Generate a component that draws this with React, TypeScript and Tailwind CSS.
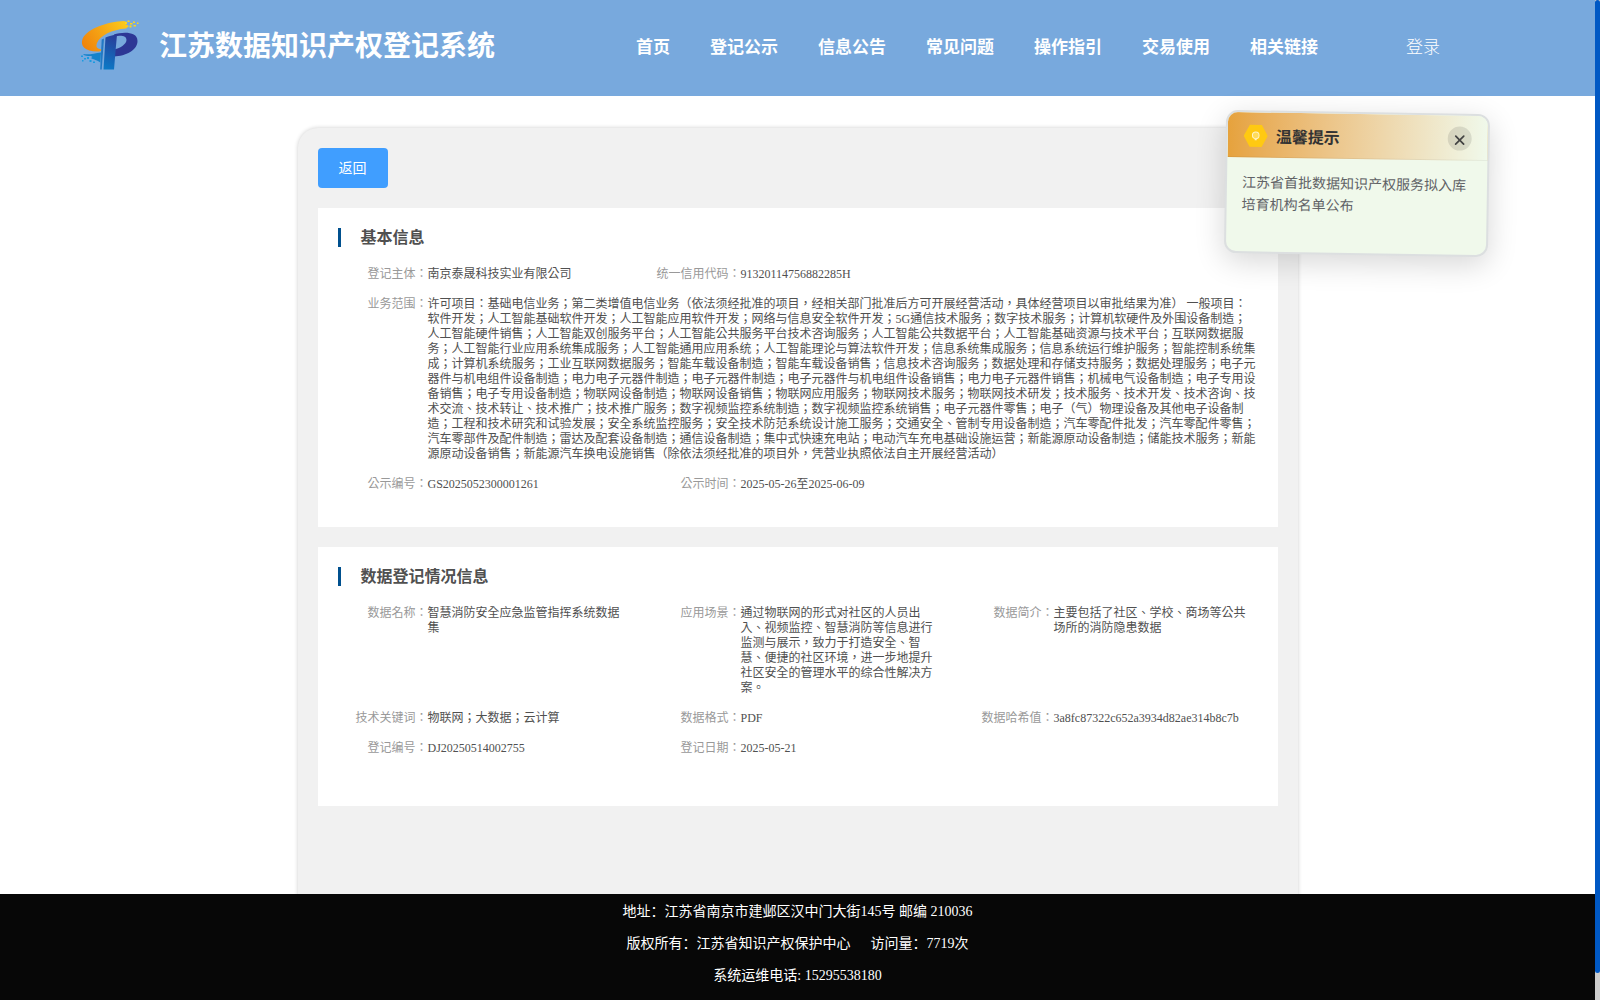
import React, { useState } from 'react';
import { X } from 'lucide-react';
import clsx from 'clsx';

interface InfoItem {
  label: string;
  value: string;
  wide?: boolean;
}

const NAV_ITEMS = ['首页', '登记公示', '信息公告', '常见问题', '操作指引', '交易使用', '相关链接'];

const BUSINESS_SCOPE = `许可项目：基础电信业务；第二类增值电信业务（依法须经批准的项目，经相关部门批准后方可开展经营活动，具体经营项目以审批结果为准） 一般项目：
软件开发；人工智能基础软件开发；人工智能应用软件开发；网络与信息安全软件开发；5G通信技术服务；数字技术服务；计算机软硬件及外围设备制造；
人工智能硬件销售；人工智能双创服务平台；人工智能公共服务平台技术咨询服务；人工智能公共数据平台；人工智能基础资源与技术平台；互联网数据服
务；人工智能行业应用系统集成服务；人工智能通用应用系统；人工智能理论与算法软件开发；信息系统集成服务；信息系统运行维护服务；智能控制系统集
成；计算机系统服务；工业互联网数据服务；智能车载设备制造；智能车载设备销售；信息技术咨询服务；数据处理和存储支持服务；数据处理服务；电子元
器件与机电组件设备制造；电力电子元器件制造；电子元器件制造；电子元器件与机电组件设备销售；电力电子元器件销售；机械电气设备制造；电子专用设
备销售；电子专用设备制造；物联网设备制造；物联网设备销售；物联网应用服务；物联网技术服务；物联网技术研发；技术服务、技术开发、技术咨询、技
术交流、技术转让、技术推广；技术推广服务；数字视频监控系统制造；数字视频监控系统销售；电子元器件零售；电子（气）物理设备及其他电子设备制
造；工程和技术研究和试验发展；安全系统监控服务；安全技术防范系统设计施工服务；交通安全、管制专用设备制造；汽车零配件批发；汽车零配件零售；
汽车零部件及配件制造；雷达及配套设备制造；通信设备制造；集中式快速充电站；电动汽车充电基础设施运营；新能源原动设备制造；储能技术服务；新能
源原动设备销售；新能源汽车换电设施销售（除依法须经批准的项目外，凭营业执照依法自主开展经营活动）`;

const BASIC_INFO: InfoItem[] = [
  { label: '登记主体', value: '南京泰晟科技实业有限公司' },
  { label: '统一信用代码', value: '91320114756882285H' },
  { label: '业务范围', value: BUSINESS_SCOPE, wide: true },
  { label: '公示编号', value: 'GS2025052300001261' },
  { label: '公示时间', value: '2025-05-26至2025-06-09' },
];

const DATA_INFO: InfoItem[] = [
  { label: '数据名称', value: '智慧消防安全应急监管指挥系统数据\n集' },
  {
    label: '应用场景',
    value:
      '通过物联网的形式对社区的人员出\n入、视频监控、智慧消防等信息进行\n监测与展示，致力于打造安全、智\n慧、便捷的社区环境，进一步地提升\n社区安全的管理水平的综合性解决方\n案。',
  },
  { label: '数据简介', value: '主要包括了社区、学校、商场等公共\n场所的消防隐患数据' },
  { label: '技术关键词', value: '物联网；大数据；云计算' },
  { label: '数据格式', value: 'PDF' },
  { label: '数据哈希值', value: '3a8fc87322c652a3934d82ae314b8c7b' },
  { label: '登记编号', value: 'DJ20250514002755' },
  { label: '登记日期', value: '2025-05-21' },
];

function Logo() {
  return (
    <svg width="60" height="52" viewBox="0 0 60 52" fill="none">
      <defs>
        <linearGradient id="swoosh" x1="0" y1="34" x2="50" y2="2" gradientUnits="userSpaceOnUse">
          <stop offset="0" stopColor="#ee7a0b" />
          <stop offset="1" stopColor="#fdd01d" />
        </linearGradient>
        <linearGradient id="stem" x1="22" y1="50" x2="38" y2="16" gradientUnits="userSpaceOnUse">
          <stop offset="0" stopColor="#0a7cc8" />
          <stop offset="1" stopColor="#2b3a97" />
        </linearGradient>
      </defs>
      <path
        d="M44 2C28 2.500 7 9.500 2.500 20 0 27 5 33 19 32.500c1.500-.2 2.500-1 3-2-5-.5-6.500-2.500-5-6.500C20 16.500 32 10.500 46 9.500l3-2.500-3-1.500 1-2.500z"
        fill="url(#swoosh)"
      />
      <path
        d="M34 15.500c8-2.500 23.500-3.500 23.500 6.500C57.500 31 46 37 34 37.500l.5-7c6-1.500 12-5.500 12-9.500 0-4-5-5-12.500-3.500z"
        fill="#2d3795"
      />
      <path d="M25.500 18.500c3.500-1.500 7-2.500 11.500-3L35.500 32.500 34 50.500H23.500z" fill="url(#stem)" />
      <path d="M24 19.500l-2.300 31h-1.500l1.500-30z" fill="#2279c4" />
      <path d="M3 35c6 1 11-.5 18-1.500l-.7 10c-4-3-7-3-9.500-4.500 2-.5 2-1.500 0-2-3 0-6.500 0-7.800-2z" fill="#1583cb" />
      <path
        d="M1 36.500h2V38H1zM4 39h2v1.500H4zM7 38h2v2H7zM2 41h1.500v1.500H2zM9.500 41h2v2h-2zM13 42.500h2v1.500h-2z"
        fill="#1b9be0"
      />
      <path
        d="M45 3h2v2h-2zM47.500 1.500h2V3h-2zM50 4h2.500v1.500H50zM53 2.500h2v1.500h-2zM53.500 6H56v1.500h-2.500zM57 3.500h1.500V5H57zM49.500 6.500h2v2h-2z"
        fill="#fcd51f"
      />
    </svg>
  );
}

function Header() {
  return (
    <header className="flex h-24 shrink-0 items-start bg-[#78a9dd] text-white">
      <div className="ml-20 mt-[19px]">
        <Logo />
      </div>
      <h1 className="ml-[19px] mt-[26px] w-[477px] text-[28px] font-semibold leading-[42px]">
        江苏数据知识产权登记系统
      </h1>
      <nav className="mt-[36px] flex gap-10 text-[17px] font-semibold leading-6">
        {NAV_ITEMS.map((item) => (
          <a key={item} className="cursor-pointer whitespace-nowrap">
            {item}
          </a>
        ))}
      </nav>
      <a className="ml-[88px] mt-[36px] cursor-pointer whitespace-nowrap text-[17px] font-light leading-6">登录</a>
    </header>
  );
}

function InfoPanel({ title, items, className }: { title: string; items: InfoItem[]; className?: string }) {
  return (
    <section className={clsx('mt-5 bg-white pl-5 pt-5', className)}>
      <h2 className="flex h-[19px] items-center border-l-[3px] border-[#00508e] pl-5 text-base font-bold text-[#505050]">
        {title}
      </h2>
      <div className="mt-5 grid w-[939px] grid-cols-3 gap-y-[15px] text-xs leading-[15px]">
        {items.map((item) => (
          <div key={item.label} className={clsx('flex', item.wide && 'col-span-3')}>
            <span className="w-[90px] shrink-0 text-right text-[#999]">{item.label}：</span>
            <span className="whitespace-pre text-[#505050]">{item.value}</span>
          </div>
        ))}
      </div>
    </section>
  );
}

function NoticePopup({ onClose }: { onClose: () => void }) {
  return (
    <div className="absolute left-[1225px] top-[112px] h-[143px] w-[264px] rotate-[0.9deg] overflow-hidden rounded-xl border-2 border-[#dcdfe0] bg-[#f0f9eb] shadow-[0_8px_30px_rgba(0,0,0,0.16)]">
      <div className="flex h-[45px] items-center border-b border-black/5 bg-linear-to-r from-[#e6a23c] to-[#f0f9eb] pl-4 pr-4">
        <svg width="24" height="24" viewBox="0 0 24 24" className="translate-y-[1.5px]">
          <path d="M6 1h12l6 11-6 11H6L0 12z" fill="#ffc912" />
          <circle cx="12" cy="11.500" r="3.300" fill="#ffdc5a" stroke="#fff3c4" strokeWidth="1" />
          <path d="M11 15.500h2" stroke="#fff3c4" strokeWidth="1.500" />
        </svg>
        <span className="ml-2 flex-1 translate-y-[3px] text-base font-bold text-[#333]">温馨提示</span>
        <button
          onClick={onClose}
          className="flex h-6 w-6 translate-y-px cursor-pointer items-center justify-center rounded-full bg-black/10 text-[#444]"
        >
          <X size={16} strokeWidth={2.6} className="translate-y-[1.5px]" />
        </button>
      </div>
      <p className="pl-[15px] pr-4 pt-[15px] text-sm leading-[22px] text-[#606266]">
        江苏省首批数据知识产权服务拟入库培育机构名单公布
      </p>
    </div>
  );
}

export default function App() {
  const [noticeOpen, setNoticeOpen] = useState(true);

  return (
    <div className="relative flex h-[1000px] w-[1600px] overflow-hidden bg-white font-['Liberation_Serif','Noto_Sans_CJK_SC',sans-serif] [text-spacing-trim:space-all]">
      <div className="flex w-[1595px] flex-col">
        <Header />

        <main className="flex-1 overflow-hidden pt-8">
          <div className="mx-auto h-[900px] w-[1000px] rounded-[20px] bg-[#f1f1f1] p-5 shadow-[0_0_4px_rgba(0,0,0,0.2)]">
            <button className="flex h-10 w-[70px] cursor-pointer items-center justify-center rounded bg-[#409eff] pt-px text-sm text-white">
              返回
            </button>
            <div className="font-['Liberation_Serif','Noto_Sans_CJK_TC',sans-serif]">
              <InfoPanel title="基本信息" items={BASIC_INFO} className="h-[319px]" />
              <InfoPanel title="数据登记情况信息" items={DATA_INFO} className="h-[259px]" />
            </div>
          </div>
        </main>

        <footer className="h-[106px] shrink-0 bg-[#070707] pt-0.5 text-center text-sm leading-8 text-white">
          <p>地址：江苏省南京市建邺区汉中门大街145号 邮编 210036</p>
          <p>
            版权所有：江苏省知识产权保护中心<span className="ml-5">访问量：7719次</span>
          </p>
          <p>系统运维电话: 15295538180</p>
        </footer>
      </div>

      {/* 滚动条 */}
      <div className="w-[5px] bg-[#ccc]">
        <div className="h-[973px] rounded-[3px] bg-[#0058c4]" />
      </div>

      {noticeOpen && <NoticePopup onClose={() => setNoticeOpen(false)} />}
    </div>
  );
}
